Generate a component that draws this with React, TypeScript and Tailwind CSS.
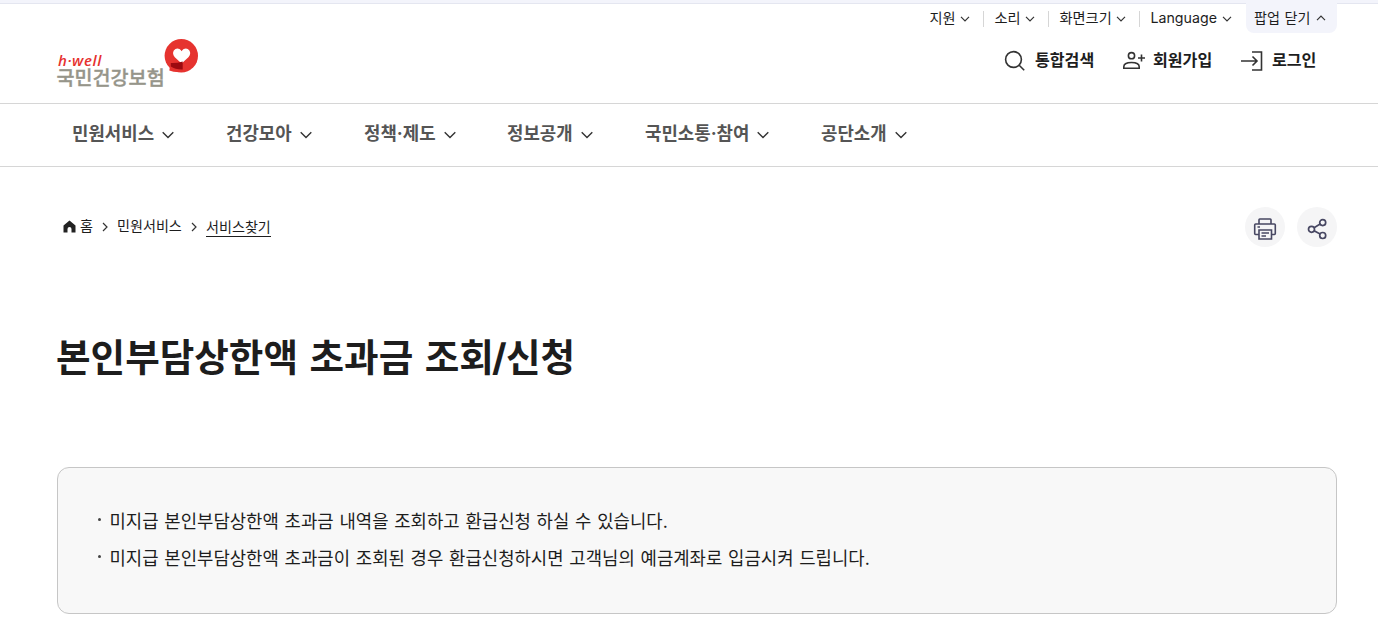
import type { ReactNode } from 'react';

const utilItems = [
  { label: '지원', width: 'w-[26px]' },
  { label: '소리', width: 'w-[26px]' },
  { label: '화면크기', width: 'w-[52px]' },
  { label: 'Language', width: 'w-[67px]' },
];

const navItems = [
  { label: '민원서비스', width: 'w-[154px]' },
  { label: '건강모아', width: 'w-[138px]' },
  { label: '정책·제도', width: 'w-[143px]' },
  { label: '정보공개', width: 'w-[138px]' },
  { label: '국민소통·참여', width: 'w-[176px]' },
  { label: '공단소개', width: 'w-[138px]' },
];

const notices = [
  '미지급 본인부담상한액 초과금 내역을 조회하고 환급신청 하실 수 있습니다.',
  '미지급 본인부담상한액 초과금이 조회된 경우 환급신청하시면 고객님의 예금계좌로 입금시켜 드립니다.',
];

function Chevron({ up = false }: { up?: boolean }) {
  return (
    <svg width="10" height="6" viewBox="0 0 10 6" fill="none" stroke="#333" strokeWidth="1.2" className="shrink-0">
      <path d={up ? 'M1 5.2 5 1.2l4 4' : 'M1 .8l4 4 4-4'} />
    </svg>
  );
}

function Logo() {
  return (
    <a href="#" className="relative block h-[52px] w-[144px]">
      <span className="absolute left-0.5 top-[13px] text-[15px] leading-[16px] font-semibold italic tracking-[0.6px] text-[#e6302e] font-['Open_Sans',sans-serif]">
        h·well
      </span>
      <span className="absolute left-[0.5px] top-[30px] whitespace-nowrap text-[19.6px] leading-[18px] font-medium text-[#96958a] [-webkit-text-stroke:0.35px_#96958a]">
        국민건강보험
      </span>
      <svg width="36" height="36" viewBox="0 0 36 36" className="absolute left-[108px] top-0">
        <circle cx="17.3" cy="16.8" r="16.7" fill="#e6332f" />
        <path d="M6.5 24h12v8.6q-6.500 1.400-13.200-1z" fill="#e6332f" />
        <path d="M17.600 24.500l-6.800-6.300q-2.900-3.200-1-6.600 2.300-3.200 5.700-1.600 1.300.7 2.100 2.200.8-1.500 2.100-2.200 3.500-1.600 5.700 1.600 2 3.400-1 6.600z" fill="#fff" />
        <path d="M6.800 24q6 .4 11.900-1.600v8.200q-7.400.2-11.900-3z" fill="#9c0a10" />
      </svg>
    </a>
  );
}

function SearchIcon() {
  return (
    <svg width="22" height="22" viewBox="0 0 22 22" fill="none" stroke="#333" strokeWidth="1.6">
      <circle cx="9.5" cy="9.5" r="7.9" />
      <path d="m15.2 15.2 5 5" />
    </svg>
  );
}

function JoinIcon() {
  return (
    <svg width="24" height="22" viewBox="0 0 24 22" fill="none" stroke="#333" strokeWidth="1.6">
      <circle cx="9.5" cy="5.7" r="3.1" />
      <path d="M1.8 18.2v-1.4c0-2.6 2.9-4.3 7.7-4.3s7.700 1.700 7.700 4.300v1.400z" />
      <path d="M19.5 4.5v7M16 8h7" />
    </svg>
  );
}

function LoginIcon() {
  return (
    <svg width="24" height="22" viewBox="0 0 24 22" fill="none" stroke="#333" strokeWidth="1.6">
      <path d="M12 2h9.5v18H12" />
      <path d="M1 11h16M12.5 6.5 17 11l-4.500 4.500" />
    </svg>
  );
}

function PrintIcon() {
  return (
    <svg width="24" height="24" viewBox="0 0 24 24" fill="none" stroke="#474762" strokeWidth="1.6">
      <path d="M6 7V2.800q0-.8.8-.8h10.400q.8 0 .8.800V7" />
      <path d="M6 17.500H2.600q-.9 0-.9-.9V8q0-1 1-1h18.600q1 0 1 1v8.600q0 .9-.9.900H18" />
      <path d="M6 13h12.500v9H6zM4.500 10h2.500M8.500 16h7.500M8.500 19h4.500" />
    </svg>
  );
}

function ShareIcon() {
  return (
    <svg width="24" height="24" viewBox="0 0 24 24" fill="none" stroke="#474762" strokeWidth="1.7">
      <circle cx="6.5" cy="12.3" r="3" />
      <circle cx="17.7" cy="5.6" r="3" />
      <circle cx="17.7" cy="18.5" r="3" />
      <path d="m9.1 10.7 6-3.600M9.100 13.800l6 3.300" />
    </svg>
  );
}

function UserLink({ icon, label, className }: { icon: ReactNode; label: string; className: string }) {
  return (
    <a href="#" className={`flex h-7 items-center whitespace-nowrap ${className}`}>
      <span className="mt-0.5">{icon}</span>
      <span className="text-[16.1px] leading-7 font-bold text-[#1d1d1d]">{label}</span>
    </a>
  );
}

function CrumbArrow() {
  return (
    <svg width="6" height="10" viewBox="0 0 6 10" fill="none" stroke="#333" strokeWidth="1.2">
      <path d="m1 1 4 4-4 4" />
    </svg>
  );
}

export default function App() {
  return (
    <div className="h-[639px] overflow-hidden bg-white text-[#1d1d1d] font-['Inter','Noto_Sans_CJK_KR',sans-serif]">
      <div className="h-1 border-b border-[#e4e6f0] bg-[#f3f4fb]" />

      {/* 헤더 */}
      <header className="flex h-[100px] justify-between border-b border-[#d6d6d6] pr-[41px] pl-14">
        <div className="pt-[35px]">
          <Logo />
        </div>
        <div className="flex flex-col items-end">
          <div className="-mt-px flex">
            <ul className="flex h-8 items-center text-[14.2px] leading-5">
              {utilItems.map((item, i) => (
                <li key={item.label} className="flex items-center">
                  {i > 0 && <span className="mr-[10.5px] h-4 w-px bg-[#d6d6d6]" />}
                  <span className={`-mt-0.5 whitespace-nowrap ${item.width}`}>{item.label}</span>
                  <span className="mr-[13px] ml-[4.5px]">
                    <Chevron />
                  </span>
                </li>
              ))}
            </ul>
            <button className="ml-px flex h-[30px] w-[91px] items-center rounded-b-lg bg-[#f3f4fb] pl-2 text-[14.1px] leading-5">
              <span className="w-[58px] text-left whitespace-nowrap [word-spacing:0.6px]">팝업 닫기</span>
              <span className="ml-1">
                <Chevron up />
              </span>
            </button>
          </div>
          <div className="mt-[11px] flex pr-5">
            <UserLink icon={<SearchIcon />} label="통합검색" className="w-[118px] gap-[9px]" />
            <UserLink icon={<JoinIcon />} label="회원가입" className="w-[118px] gap-[7px]" />
            <UserLink icon={<LoginIcon />} label="로그인" className="w-[77px] gap-2" />
          </div>
        </div>
      </header>

      {/* 메인 메뉴 */}
      <nav className="flex h-[63px] border-b border-[#d6d6d6] pl-[72px]">
        {navItems.map((item) => (
          <a key={item.label} href="#" className={`flex h-[60px] items-center gap-2 text-[17.85px] font-bold text-[#555] ${item.width}`}>
            <span className="whitespace-nowrap">{item.label}</span>
            <svg width="12" height="8" viewBox="0 0 12 8" fill="none" stroke="#333" strokeWidth="1.4" className="mt-0.5 shrink-0">
              <path d="m.7 1.2 5.3 5.3 5.300-5.300" />
            </svg>
          </a>
        ))}
      </nav>

      <main className="pr-[41px] pl-[57px]">
        <div className="flex items-center justify-between pt-10">
          {/* 현재 위치 */}
          <div className="-mt-0.5 flex items-center pl-[5.5px] text-[14.1px] leading-5">
            <svg width="13" height="13" viewBox="0 0 13 13" fill="#222" className="mt-px">
              <path d="M6.5.5 12.5 5.500v7H8.500V9q0-2-2-2t-2 2v3.500h-4v-7z" />
            </svg>
            <span className="w-[21.5px] pl-[4.5px]">홈</span>
            <span className="mr-[9px] ml-[5px] pt-0.5">
              <CrumbArrow />
            </span>
            <span className="w-[65px] whitespace-nowrap">민원서비스</span>
            <span className="mx-[9px] pt-0.5">
              <CrumbArrow />
            </span>
            <span className="mt-[3px] w-[65px] whitespace-nowrap border-b border-[#1d1d1d] leading-[18px]">서비스찾기</span>
          </div>
          <div className="flex gap-3">
            <button className="flex size-10 items-center justify-center rounded-full bg-[#f5f5f6] pt-1">
              <PrintIcon />
            </button>
            <button className="flex size-10 items-center justify-center rounded-full bg-[#f5f5f6] pt-1">
              <ShareIcon />
            </button>
          </div>
        </div>

        <h1 className="mt-[81px] -ml-px h-[60px] text-[37.6px] leading-[60px] font-bold whitespace-nowrap [word-spacing:2.6px]">
          본인부담상한액 초과금 조회<span className="-ml-0.5 tracking-[-0.5px]">/</span>신청
        </h1>

        {/* 안내 */}
        <ul className="mt-[79px] flex h-[147px] flex-col gap-2 rounded-xl border border-[#c6c6c6] bg-[#f8f8f8] pt-[39px] pl-10">
          {notices.map((text) => (
            <li key={text} className="flex h-[29px] items-center text-[17.8px] leading-[29px] whitespace-nowrap [word-spacing:0.75px]">
              <span className="mr-[8.5px] mb-[5px] size-[3px] rounded-full bg-[#444]" />
              {text}
            </li>
          ))}
        </ul>
      </main>
    </div>
  );
}
